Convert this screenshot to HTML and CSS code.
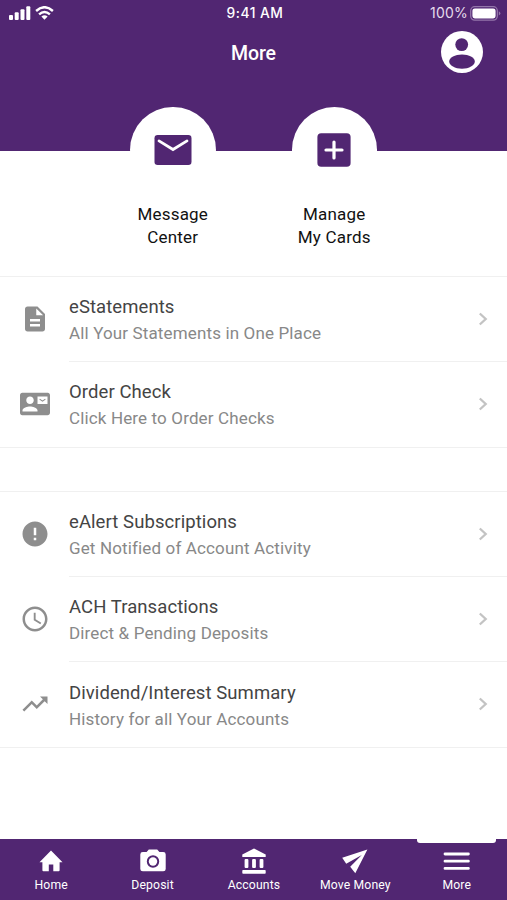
FILE: index.html
```html
<!DOCTYPE html>
<html lang="en">
<head>
<meta charset="utf-8">
<meta name="viewport" content="width=device-width, initial-scale=1">
<title>More</title>
<link rel="stylesheet" href="styles.css">
</head>
<body>
<div class="screen">
  <header class="header">
    <div class="status">
      <div class="signal">
        <svg width="22" height="14" viewBox="0 0 22 14" fill="currentColor"><rect y="9" width="4" height="5" rx="1"/><rect x="5.7" y="6.3" width="4" height="7.7" rx="1"/><rect x="11.5" y="3.3" width="4" height="10.7" rx="1"/><rect x="17.3" y="0.3" width="4" height="13.7" rx="1"/></svg>
        <svg width="19" height="14" viewBox="0 0 19 14" fill="none" stroke="currentColor" stroke-width="2.4"><path d="M1.1 5Q9.5-2.6 17.9 5"/><path d="M4.1 8.4Q9.5 3.4 14.9 8.4"/><path d="M6.4 10.6Q9.5 7.8 12.6 10.6L9.5 13.8Z" fill="currentColor" stroke="none"/></svg>
      </div>
      <span class="time">9:41 AM</span>
      <div class="power">
        <span class="percent">100%</span>
        <svg class="battery" width="31" height="15" viewBox="0 0 31 15"><rect x=".7" y=".7" width="26.6" height="13.4" rx="4" fill="none" stroke="#9476aa" stroke-width="1.3"/><rect x="2.4" y="2.4" width="23.2" height="10" rx="2.4" fill="#fff"/><path d="M28.8 5.2q3.2 2.2 0 4.4z" fill="#9476aa"/></svg>
      </div>
    </div>
    <div class="titlebar">
      <h1 class="title">More</h1>
      <svg class="avatar" width="42" height="42" viewBox="0 0 42 42"><circle cx="21" cy="21" r="21" fill="#fff"/><circle cx="20.7" cy="13.6" r="6.4" fill="#512672"/><path d="M8.2 30.500C8.200 26.500 14 23.500 21 23.500s12.800 3 12.800 7-5.800 7.200-12.800 7.200-12.800-3.200-12.800-7.200Z" fill="#512672"/></svg>
    </div>
  </header>

  <section class="actions">
    <a class="action">
      <span class="disc"><svg width="38" height="30" viewBox="0 0 38 30"><rect x=".5" width="37" height="30" rx="3.2" fill="#512672"/><path d="M5 5.9 19 14.5 33 5.9" fill="none" stroke="#fff" stroke-width="2.8" stroke-linecap="round"/></svg></span>
      <span class="action-label">Message<br>Center</span>
    </a>
    <a class="action">
      <span class="disc"><svg width="34" height="34" viewBox="0 0 34 34"><rect x=".4" y=".3" width="33.2" height="33.4" rx="3.8" fill="#512672"/><path d="M17 9v16M9 17h16" fill="none" stroke="#fff" stroke-width="3.2" stroke-linecap="round"/></svg></span>
      <span class="action-label">Manage<br>My Cards</span>
    </a>
  </section>

  <ul class="group first">
    <li class="row">
      <svg class="icon" width="30" height="30" viewBox="0 0 24 24" fill="currentColor"><path d="M14 2H6c-1.1 0-2 .9-2 2v16c0 1.1.9 2 2 2h12c1.1 0 2-.9 2-2V8l-6-6zm2 16H8v-2h8v2zm0-4H8v-2h8v2zm-3-5V3.500L18.500 9H13z"/></svg>
      <div class="body"><div class="copy"><span class="name">eStatements</span><span class="detail">All Your Statements in One Place</span></div><svg class="chevron" width="10" height="14" viewBox="0 0 10 14"><path d="M1.8 1.5 7.7 7l-5.900 5.500"/></svg></div>
    </li>
    <li class="row">
      <svg class="icon" width="30" height="30" viewBox="0 0 24 24" fill="currentColor"><path d="M22.200 3H1.800C.8 3 0 3.900 0 5v14c0 1.100.8 2 1.800 2H22c1.100 0 2-.9 2-2V5c0-1.100-.8-2-1.800-2zM8 6c1.660 0 3 1.340 3 3s-1.340 3-3 3-3-1.340-3-3 1.340-3 3-3zm6 12H2v-1c0-2 4-3.100 6-3.100s6 1.100 6 3.100v1zm8-6h-8V6h8v6z"/><path d="M15.700 8.100 18 9.700l2.300-1.600" fill="none" stroke="currentColor" stroke-width=".9"/></svg>
      <div class="body"><div class="copy"><span class="name">Order Check</span><span class="detail">Click Here to Order Checks</span></div><svg class="chevron" width="10" height="14" viewBox="0 0 10 14"><path d="M1.8 1.5 7.7 7l-5.900 5.500"/></svg></div>
    </li>
  </ul>

  <ul class="group second">
    <li class="row">
      <svg class="icon" width="30" height="30" viewBox="0 0 24 24" fill="currentColor"><path d="M12 2C6.480 2 2 6.480 2 12s4.480 10 10 10 10-4.480 10-10S17.520 2 12 2zm1 15h-2v-2h2v2zm0-4h-2V7h2v6z"/></svg>
      <div class="body"><div class="copy"><span class="name">eAlert Subscriptions</span><span class="detail">Get Notified of Account Activity</span></div><svg class="chevron" width="10" height="14" viewBox="0 0 10 14"><path d="M1.8 1.5 7.7 7l-5.900 5.500"/></svg></div>
    </li>
    <li class="row middle">
      <svg class="icon" width="30" height="30" viewBox="0 0 24 24" fill="currentColor"><path d="M11.990 2C6.470 2 2 6.480 2 12s4.470 10 9.990 10C17.520 22 22 17.520 22 12S17.520 2 11.990 2zM12 20c-4.420 0-8-3.580-8-8s3.580-8 8-8 8 3.580 8 8-3.580 8-8 8zm.5-13H11v6l5.250 3.150.75-1.230-4.500-2.670z"/></svg>
      <div class="body"><div class="copy"><span class="name">ACH Transactions</span><span class="detail">Direct &amp; Pending Deposits</span></div><svg class="chevron" width="10" height="14" viewBox="0 0 10 14"><path d="M1.8 1.5 7.7 7l-5.900 5.500"/></svg></div>
    </li>
    <li class="row last">
      <svg class="icon" width="30" height="30" viewBox="0 0 24 24" fill="currentColor"><path d="M16 6l2.290 2.290-4.880 4.880-4-4L2 16.590 3.410 18l6-6 4 4 6.300-6.290L22 12V6z"/></svg>
      <div class="body"><div class="copy"><span class="name">Dividend/Interest Summary</span><span class="detail">History for all Your Accounts</span></div><svg class="chevron" width="10" height="14" viewBox="0 0 10 14"><path d="M1.8 1.5 7.7 7l-5.900 5.500"/></svg></div>
    </li>
  </ul>

  <nav class="tabs">
    <a class="tab"><svg width="28" height="28" viewBox="0 0 28 28" fill="currentColor"><path d="M11.800 24.300V17.500h4.500v6.800h5.300q1 0 1-1v-8.100h2.900L14 3.500 2.500 15.200h2.900v8.100q0 1 1 1z"/></svg><span>Home</span></a>
    <a class="tab"><svg width="28" height="28" viewBox="0 0 28 28" fill="currentColor"><path fill-rule="evenodd" d="M9.800 2.400h8.400l2.200 2.600h3.800q2.500 0 2.500 2.400v14.500q0 2.400-2.500 2.400H3.800q-2.500 0-2.500-2.400V7.400Q1.300 5 3.800 5h3.800zM14 8.300a6.200 6.200 0 1 0 0 12.400 6.200 6.200 0 0 0 0-12.400z"/><circle cx="14" cy="14.500" r="4.200"/></svg><span>Deposit</span></a>
    <a class="tab"><svg width="28" height="28" viewBox="0 0 28 28" fill="currentColor"><path d="M14 1.400 25.700 7.500v2.400H2.300V7.500z"/><rect x="4.600" y="12.100" width="3.800" height="8.800" rx="1"/><rect x="12.100" y="12.100" width="3.800" height="8.800" rx="1"/><rect x="19.600" y="12.100" width="3.800" height="8.800" rx="1"/><rect x="2.300" y="23" width="23.400" height="3.700" rx=".8"/></svg><span>Accounts</span></a>
    <a class="tab"><svg width="28" height="28" viewBox="0 0 28 28" fill="currentColor"><path d="M26.400 2.600 1.200 10.700 5.200 16.800 20.800 8 9.200 19.700 14.300 26.200z"/></svg><span>Move Money</span></a>
    <a class="tab active"><svg width="28" height="28" viewBox="0 0 28 28" fill="none" stroke="currentColor" stroke-width="2.800" stroke-linecap="round"><path d="M2 7h23.400M2 14.200h23.400M2 21.400h23.400"/></svg><span>More</span></a>
  </nav>
</div>
</body>
</html>
```
FILE: styles.css
```css
* { box-sizing: border-box; }
body { margin: 0; background: #fff; font-family: Roboto, "Liberation Sans", sans-serif; }
svg { display: block; flex: none; }

.screen { width: 100%; height: 900px; display: flex; flex-direction: column; overflow: hidden; }

.header { height: 151px; flex: none; background: #512672; color: #fff; }
.status { height: 26px; display: grid; grid-template-columns: 1fr auto 1fr; align-items: center; padding: 0 6px 0 9px; }
.signal { display: flex; gap: 4px; }
.time { font: 500 13.8px/26px Inter, sans-serif; letter-spacing: .5px; }
.power { display: flex; align-items: center; justify-content: flex-end; gap: 2px; }
.percent { font: 400 14px/26px Inter, sans-serif; letter-spacing: .2px; color: #e6dcec; }
.titlebar { height: 52px; display: grid; grid-template-columns: 1fr auto 1fr; align-items: center; padding: 0 24px; }
.title { grid-column: 2; margin: 2px 0 0; font-size: 19.500px; font-weight: 500; letter-spacing: -.1px; }
.avatar { justify-self: end; }

.actions { display: flex; justify-content: center; gap: 37.500px; margin-top: -44px; flex: none; height: 169px; }
.action { width: 124px; display: flex; flex-direction: column; align-items: center; }
.disc { width: 85.500px; height: 86px; border-radius: 50%; background: #fff; display: flex; align-items: center; justify-content: center; }
.action-label { margin-top: 10px; text-align: center; font-size: 17px; line-height: 22.500px; letter-spacing: .2px; color: #111; }

.group { list-style: none; margin: 0; padding: 0; flex: none; border-top: 1px solid #f0f0f0; border-bottom: 1px solid #f0f0f0; }
.second { margin-top: 43px; }
.row { display: flex; height: 86px; color: #8e8e8e; }
.row:first-child { height: 84px; }
.middle { height: 85px; }
.icon { margin: 28px 19px 0 20px; }
.row:first-child .icon { margin-top: 26.500px; }
.body { flex: 1; display: flex; align-items: flex-start; justify-content: space-between; padding-right: 19px; }
.row:not(:first-child) .body { border-top: 1px solid #f0f0f0; }
.copy { display: flex; flex-direction: column; padding-top: 17px; line-height: 26px; white-space: nowrap; }
.last .copy { padding-top: 18px; }
.name { font-size: 18.500px; letter-spacing: .08px; color: #444; }
.detail { font-size: 17px; letter-spacing: .14px; color: #888; }
.chevron { margin-top: 35px; fill: none; stroke: #c3c3c3; stroke-width: 2.300; }
.row:first-child .chevron { margin-top: 34.500px; }

.tabs { margin-top: auto; flex: none; height: 61px; display: grid; grid-template-columns: repeat(5, 1fr); background: #512672; color: #fff; }
.tab { position: relative; display: flex; flex-direction: column; align-items: center; padding: 8px 0 0 1px; font-size: 12.200px; line-height: 16px; letter-spacing: .15px; gap: 2px; }
.active::before { content: ""; position: absolute; top: -1px; left: 11px; width: 79px; height: 5px; border-radius: 0 0 3px 3px; background: #fff; }
```
